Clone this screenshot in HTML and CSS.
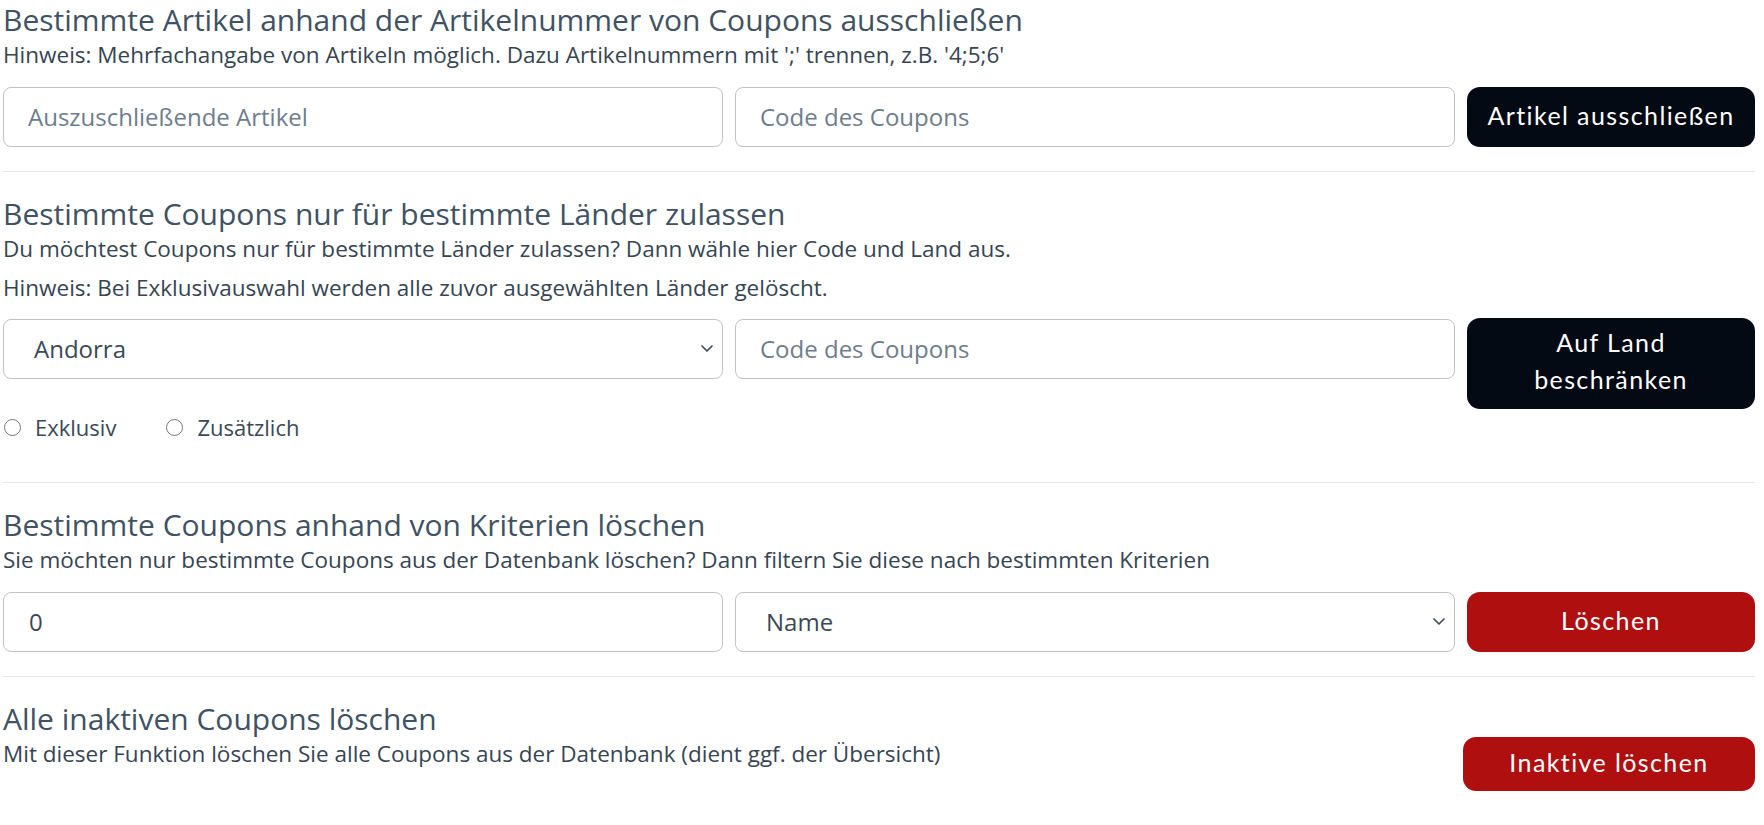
FILE: index.html
```html
<!DOCTYPE html>
<html lang="de">
<head>
<meta charset="utf-8">
<title>Coupons</title>
<link rel="stylesheet" href="styles.css">
</head>
<body>
<div class="page">
  <section class="section first">
    <h4 class="title">Bestimmte Artikel anhand der Artikelnummer von Coupons ausschließen</h4>
    <p class="text">Hinweis: Mehrfachangabe von Artikeln möglich. Dazu Artikelnummern mit ';' trennen, z.B. '4;5;6'</p>
    <div class="row">
      <input class="field" type="text" placeholder="Auszuschließende Artikel">
      <input class="field" type="text" placeholder="Code des Coupons">
      <button class="btn dark">Artikel ausschließen</button>
    </div>
  </section>

  <section class="section land">
    <h4 class="title">Bestimmte Coupons nur für bestimmte Länder zulassen</h4>
    <p class="text">Du möchtest Coupons nur für bestimmte Länder zulassen? Dann wähle hier Code und Land aus.</p>
    <p class="text">Hinweis: Bei Exklusivauswahl werden alle zuvor ausgewählten Länder gelöscht.</p>
    <div class="row row-land">
      <div class="select-wrap">
        <select class="field select">
          <option>Andorra</option>
        </select>
        <svg class="chevron" viewBox="0 0 16 16" width="16" height="16" aria-hidden="true"><path d="M3 6l5 5 5-5" fill="none" stroke="#3f4d5a" stroke-width="1.7" stroke-linecap="round" stroke-linejoin="round"/></svg>
      </div>
      <input class="field" type="text" placeholder="Code des Coupons">
      <button class="btn dark tall">Auf Land beschränken</button>
      <div class="radios">
        <label class="radio"><input type="radio" name="mode"><span>Exklusiv</span></label>
        <label class="radio"><input type="radio" name="mode"><span>Zusätzlich</span></label>
      </div>
    </div>
  </section>

  <section class="section">
    <h4 class="title">Bestimmte Coupons anhand von Kriterien löschen</h4>
    <p class="text">Sie möchten nur bestimmte Coupons aus der Datenbank löschen? Dann filtern Sie diese nach bestimmten Kriterien</p>
    <div class="row">
      <input class="field value" type="text" value="0">
      <div class="select-wrap">
        <select class="field select">
          <option>Name</option>
        </select>
        <svg class="chevron" viewBox="0 0 16 16" width="16" height="16" aria-hidden="true"><path d="M3 6l5 5 5-5" fill="none" stroke="#3f4d5a" stroke-width="1.7" stroke-linecap="round" stroke-linejoin="round"/></svg>
      </div>
      <button class="btn red">Löschen</button>
    </div>
  </section>

  <section class="section last">
    <div class="split">
      <div>
        <h4 class="title">Alle inaktiven Coupons löschen</h4>
        <p class="text">Mit dieser Funktion löschen Sie alle Coupons aus der Datenbank (dient ggf. der Übersicht)</p>
      </div>
      <button class="btn red small">Inaktive löschen</button>
    </div>
  </section>
</div>
</body>
</html>
```

FILE: styles.css
```css
* {
  box-sizing: border-box;
}

html, body {
  margin: 0;
  padding: 0;
  background: #ffffff;
}

body {
  font-family: "Open Sans", "Noto Sans", sans-serif;
  color: #3a4957;
}

.page {
  width: 1752px;
  margin-left: 3px;
}

.section {
  padding: 24px 0 24px;
  border-bottom: 1px solid #e3e8ee;
}

.section.first {
  padding-top: 2px;
}

.section.land {
  padding-bottom: 39px;
}

.section.last {
  border-bottom: none;
}

.title {
  margin: 0 0 1px;
  font-size: 30px;
  line-height: 36px;
  font-weight: 400;
  color: #405263;
}

.text {
  margin: 0;
  font-size: 22.5px;
  line-height: 32px;
  color: #364553;
}

.text + .text {
  margin-top: 7px;
}

.row {
  display: grid;
  grid-template-columns: 720px 720px 288px;
  column-gap: 12px;
  align-items: start;
  margin-top: 16px;
}

.row-land {
  margin-top: 15px;
}

.field {
  display: block;
  width: 100%;
  height: 60px;
  margin: 0;
  padding: 0 24px 2px;
  border: 1px solid #c3c3c3;
  border-radius: 8px;
  background: #ffffff;
  font-family: "Open Sans", "Noto Sans", sans-serif;
  font-size: 24px;
  color: #3a4957;
  outline: none;
}

.field::placeholder {
  color: #6e7d8d;
  opacity: 1;
}

.field.value {
  padding-left: 25px;
}

.select-wrap {
  position: relative;
}

.select {
  appearance: none;
  -webkit-appearance: none;
  padding-left: 30px;
  padding-right: 48px;
}

.chevron {
  position: absolute;
  right: 8px;
  top: 21px;
  width: 16px;
  height: 16px;
  pointer-events: none;
}

.btn {
  display: block;
  width: 100%;
  height: 60px;
  margin: 0;
  padding: 0 12px 3px;
  border: none;
  border-radius: 13px;
  font-family: "Lato", "DejaVu Sans", sans-serif;
  font-size: 25px;
  font-weight: 400;
  letter-spacing: 1.4px;
  line-height: 37px;
  color: #ffffff;
  text-align: center;
  cursor: pointer;
}

.btn.dark {
  background: #030a13;
}

.btn.tall {
  height: 91px;
  padding: 5px 30px 11px;
  margin-top: -1px;
}

.btn.red {
  background: #b00f10;
}

.btn.small {
  height: 54px;
  width: 292px;
  margin-top: 36px;
  justify-self: end;
}

.radios {
  grid-column: 1 / 3;
  display: flex;
  align-items: center;
  margin-top: 2px;
  height: 32px;
}

.radio {
  display: flex;
  align-items: center;
  font-size: 22px;
  line-height: 32px;
  color: #3a4957;
  margin-right: 49px;
}

.radio input {
  appearance: none;
  -webkit-appearance: none;
  width: 17px;
  height: 17px;
  margin: 0 14px 0 1px;
  border: 1.5px solid #767676;
  border-radius: 50%;
  background: #ffffff;
}

.split {
  display: grid;
  grid-template-columns: 1fr 292px;
  column-gap: 12px;
  align-items: start;
}
```
